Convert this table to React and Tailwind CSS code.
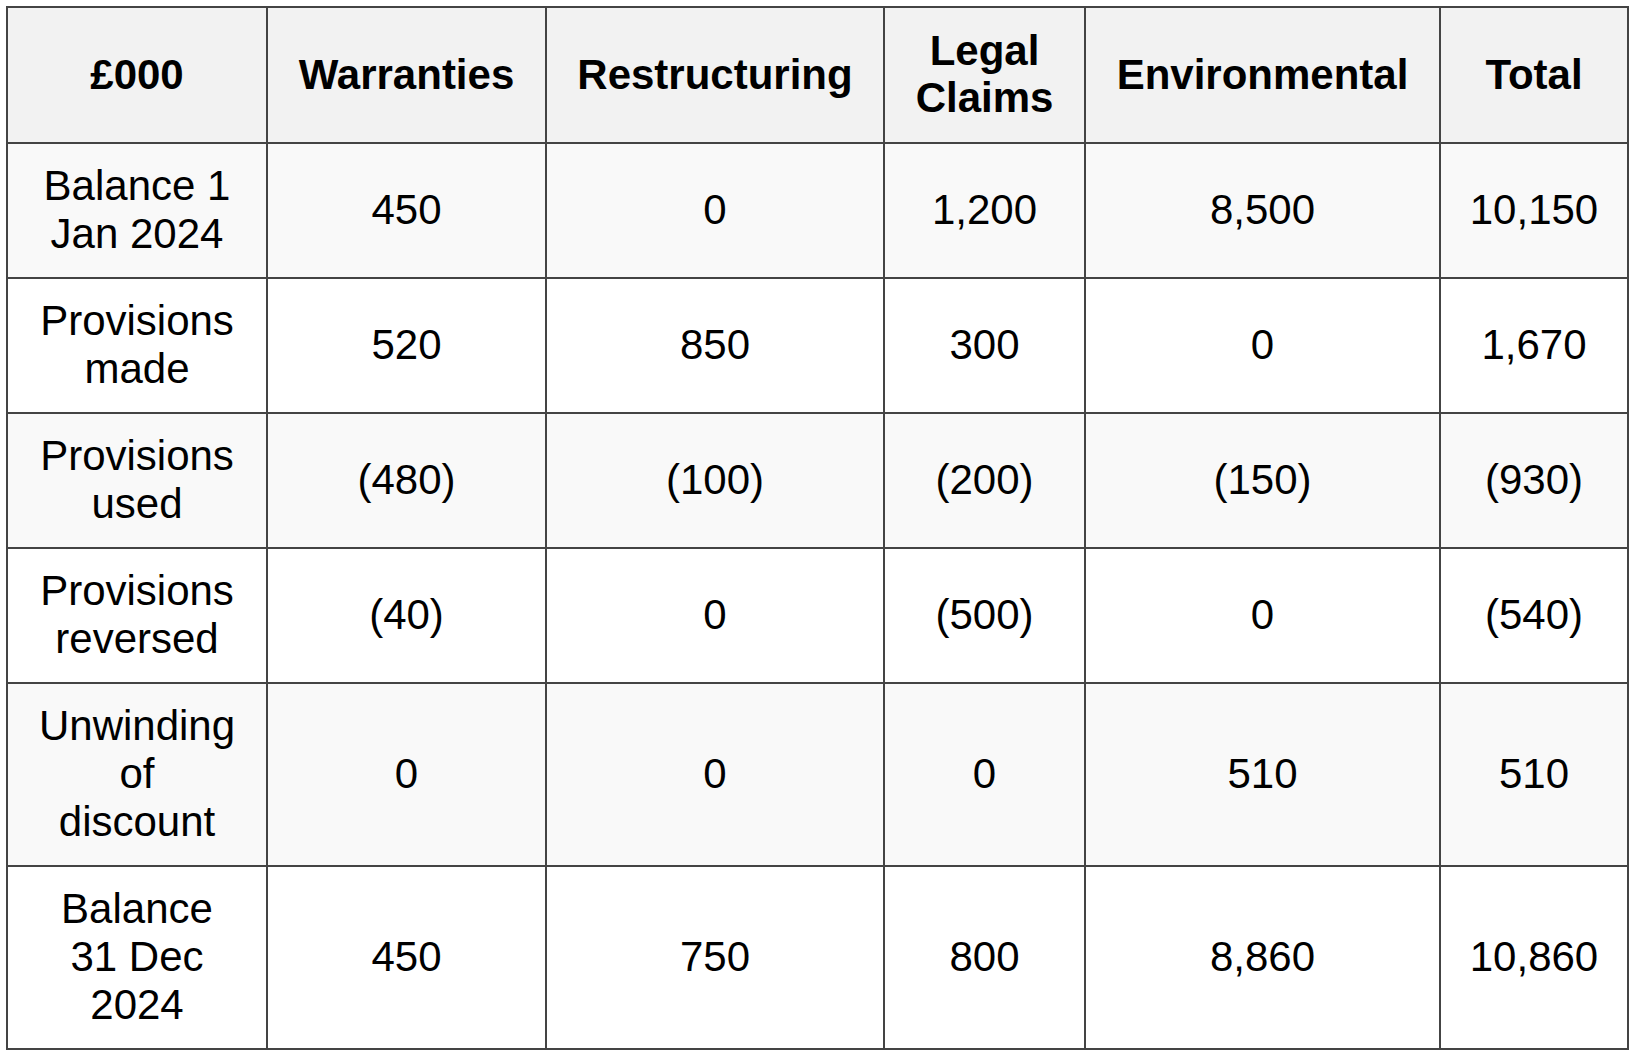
const cols = ["£000", "Warranties", "Restructuring", "Legal Claims", "Environmental", "Total"];

const rows = [
  ["Balance 1 Jan 2024", "450", "0", "1,200", "8,500", "10,150"],
  ["Provisions made", "520", "850", "300", "0", "1,670"],
  ["Provisions used", "(480)", "(100)", "(200)", "(150)", "(930)"],
  ["Provisions reversed", "(40)", "0", "(500)", "0", "(540)"],
  ["Unwinding of discount", "0", "0", "0", "510", "510"],
  ["Balance 31 Dec 2024", "450", "750", "800", "8,860", "10,860"],
];

const widths = ["w-[260px]", "w-[279px]", "w-[338px]", "w-[201px]", "w-[355px]", "w-[188px]"];

export default function App() {
  return (
    <div className="min-h-screen bg-white p-[6px] font-['Liberation_Sans',Arial,sans-serif] text-black">
      <table className="table-fixed border-collapse border-2 border-[#444444] w-[1623px]">
        <colgroup>
          {widths.map((w, i) => <col key={i} className={w} />)}
        </colgroup>
        <thead>
          <tr className="bg-[#f2f2f2]">
            {cols.map((c, j) => (
              <th key={c} className={`border-2 border-[#444444] pt-[19px] pb-[21px] text-center align-middle text-[42px] leading-[47px] font-bold ${j === 0 ? "px-[30px]" : "px-5"}`}>
                {c}
              </th>
            ))}
          </tr>
        </thead>
        <tbody>
          {rows.map((r, i) => (
            <tr key={r[0]} className={i % 2 === 0 ? "bg-[#f9f9f9]" : "bg-white"}>
              {r.map((v, j) => (
                <td key={j} className={`border-2 border-[#444444] pt-[17.5px] pb-[19.5px] text-center align-middle text-[42px] leading-[48px] ${j === 0 ? "px-[30px]" : "px-5"}`}>
                  {v}
                </td>
              ))}
            </tr>
          ))}
        </tbody>
      </table>
    </div>
  );
}
